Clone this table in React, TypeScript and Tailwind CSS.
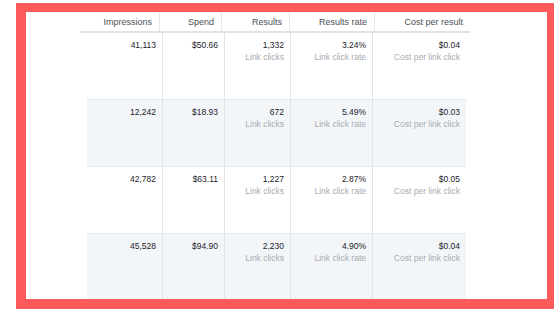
const rows = [
  { impressions: "41,113", spend: "$50.66", results: "1,332", rate: "3.24%", cost: "$0.04" },
  { impressions: "12,242", spend: "$18.93", results: "672", rate: "5.49%", cost: "$0.03" },
  { impressions: "42,782", spend: "$63.11", results: "1,227", rate: "2.87%", cost: "$0.05" },
  { impressions: "45,528", spend: "$94.90", results: "2,230", rate: "4.90%", cost: "$0.04" },
];

const headers = [
  { label: "Impressions", w: "w-[80px]" },
  { label: "Spend", w: "w-[62px]" },
  { label: "Results", w: "w-[68px]" },
  { label: "Results rate", w: "w-[85px]" },
  { label: "Cost per result", w: "w-[95px]" },
];

export default function App() {
  return (
    <div
      className="w-[560px] h-[315px] bg-white pl-[16px] pt-[3px]"
      style={{ fontFamily: '"Liberation Sans", Arial, sans-serif' }}
    >
      <div className="w-[538px] h-[306px] bg-[#fd5b5b] pl-[10px] pt-[9px] pr-[7px] pb-[10px]">
        <div className="w-full h-full bg-white overflow-hidden">
          {/* head */}
          <div className="flex ml-[54px] w-[390px] h-[21px] border-b-2 border-[#dfe3e8]">
            {headers.map((h, i) => (
              <div
                key={i}
                className={`${h.w} h-full flex items-center justify-end pt-[3px] pr-[7px] text-[9px] text-[#4b4f56] ${
                  i < headers.length - 1 ? "border-r border-[#e3e6ea]" : ""
                }`}
              >
                {h.label}
              </div>
            ))}
          </div>
          {/* body */}
          <div className="ml-[61px] w-[379px]">
            {rows.map((r, i) => (
              <div
                key={i}
                className={`flex h-[67px] border-b border-[#e3e6ea] ${i % 2 === 1 ? "bg-[#f3f6f9]" : "bg-white"}`}
              >
                <Cell w="w-[76px]" value={r.impressions} />
                <Cell w="w-[62px]" value={r.spend} />
                <Cell w="w-[66px]" value={r.results} sub="Link clicks" />
                <Cell w="w-[82px]" value={r.rate} sub="Link click rate" />
                <Cell w="w-[93px]" value={r.cost} sub="Cost per link click" last />
              </div>
            ))}
          </div>
        </div>
      </div>
    </div>
  );
}

function Cell({ w, value, sub, last }: { w: string; value: string; sub?: string; last?: boolean }) {
  return (
    <div
      className={`${w} h-full flex flex-col items-end pt-[7px] pr-[6px] ${last ? "" : "border-r border-[#dfe3e8]"}`}
    >
      <div className="text-[8.5px] leading-[11px] text-[#1d2129]">{value}</div>
      {sub && <div className="text-[8.5px] leading-[11px] mt-[1px] text-[#a7abb2]">{sub}</div>}
    </div>
  );
}
